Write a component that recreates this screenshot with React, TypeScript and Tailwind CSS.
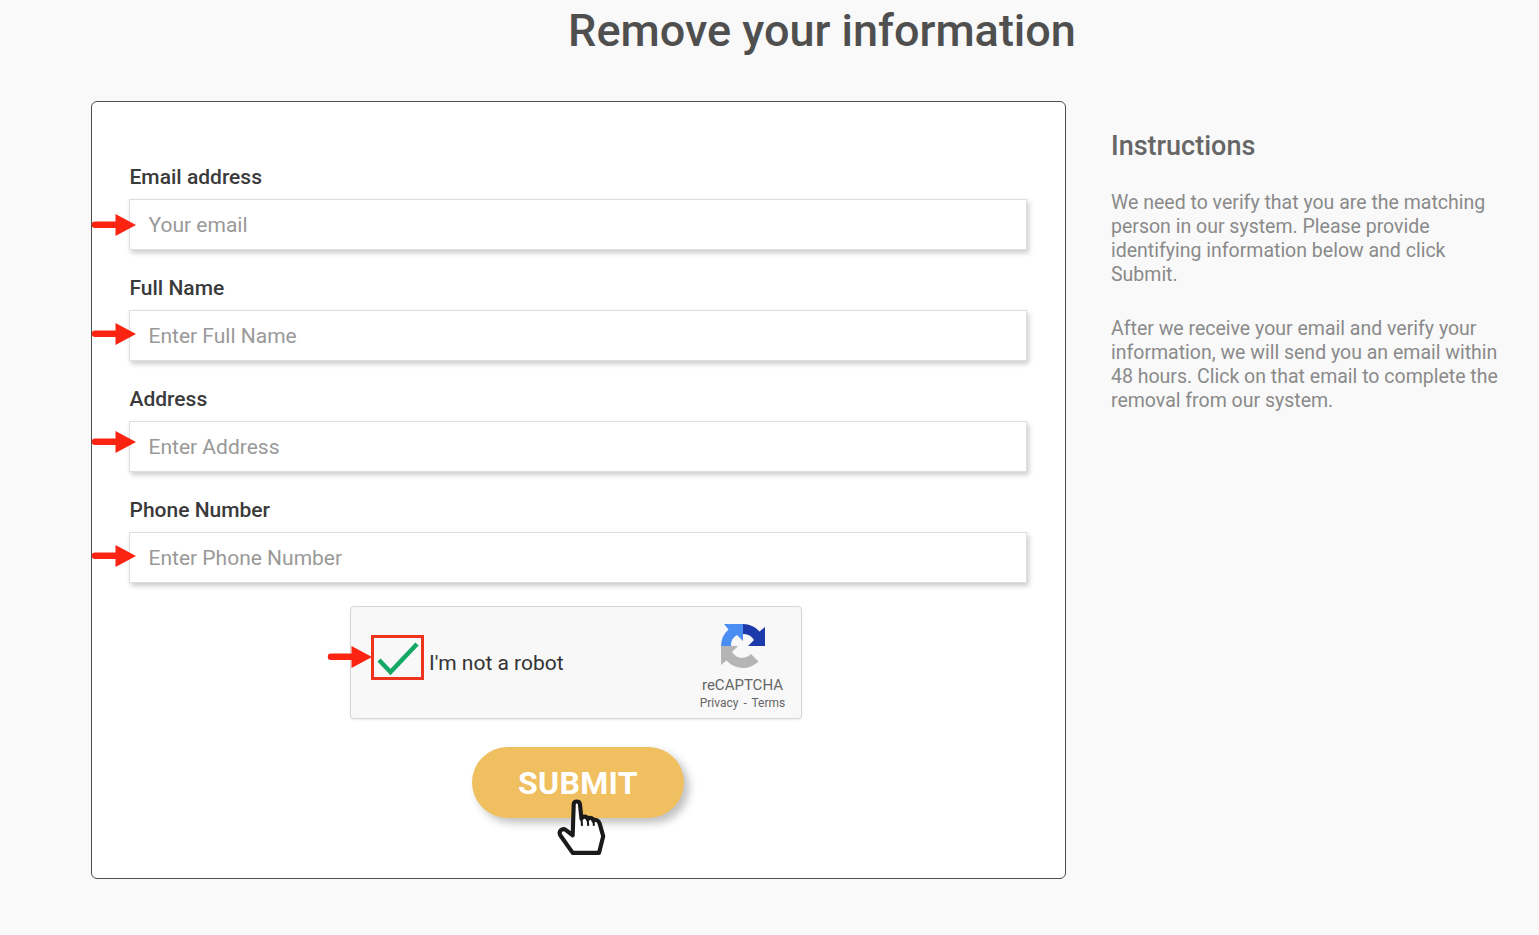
const RedArrow = ({ className }: { className: string }) => (
  <svg className={className} width="46" height="24" viewBox="0 0 46 24">
    <path d="M5 8.500H25.500V1L46 12L25.500 23V15H5A3.250 3.250 0 0 1 5 8.500Z" fill="#fb2413" />
  </svg>
);

const fields = [
  { label: 'Email address', placeholder: 'Your email', arrow: 'absolute left-[-39px] top-[14px]' },
  { label: 'Full Name', placeholder: 'Enter Full Name', arrow: 'absolute left-[-39px] top-[12px]' },
  { label: 'Address', placeholder: 'Enter Address', arrow: 'absolute left-[-39px] top-[9px]' },
  { label: 'Phone Number', placeholder: 'Enter Phone Number', arrow: 'absolute left-[-39px] top-[12px]' },
];

const RecaptchaLogo = () => (
  <svg width="44" height="44" viewBox="0 0 44 44">
    <path d="M37.500 37.500A22 22 0 0 1 5.500 36.500L0 41V22H17L11 28A12 12 0 0 0 30 30Z" fill="#b5b5b5" />
    <path d="M0 22A22 22 0 0 1 7.500 5.500L3 0H22V17L16 11A12 12 0 0 0 10 22Z" fill="#4a8ef4" />
    <path d="M22 0A22 22 0 0 1 38.500 7.500L44 3V22H27L33 16A12 12 0 0 0 22 10Z" fill="#1c3aa9" />
  </svg>
);

const HandCursor = () => (
  <svg width="54" height="60" viewBox="0 0 52 58" className="absolute left-[83px] top-[51px] blur-[0.5px]">
    <path
      d="M18 6C18 2.500 23.500 2.500 24 6L25.500 20C27 17 31 17.500 31.500 20.500C33 18.500 36.500 19 37 22C38.500 20.500 42 21 43 24.500L46.500 37L42.500 53H17L5 36C3 32 7 28.500 10.500 31L17 36Z"
      fill="#ffffff"
      stroke="#1a1a1a"
      strokeWidth="4"
      strokeLinejoin="round"
    />
    <path d="M25.500 20L26 27M31.500 20.500L32 27M37 22L37.500 27" fill="none" stroke="#1a1a1a" strokeWidth="2" />
  </svg>
);

export default function App() {
  return (
    <div className="min-h-[935px] bg-[#f9f9f9] font-['Roboto',sans-serif] pl-[91px] overflow-hidden">
      <div className="flex justify-center pl-[14px] h-[101px]">
        <h1 className="text-[45px] leading-[62px] font-medium text-[#4f4f4f]">Remove your information</h1>
      </div>

      <div className="flex items-start">
        <div className="w-[975px] h-[778px] shrink-0 bg-white border border-[#4d4d4d] rounded-[6px] pl-[37px] pt-[59px]">
          <div className="flex flex-col gap-[22px]">
            {fields.map((field) => (
              <div key={field.label} className="w-[898px]">
                <label className="block h-[38px] pl-[0.500px] text-[21px] leading-[32px] font-medium text-[#3a3a3a]">
                  {field.label}
                </label>
                <div className="relative">
                  <input
                    placeholder={field.placeholder}
                    className="w-full h-[51px] bg-white border border-[#dedede] pl-[18.500px] text-[21px] outline-none shadow-[2px_3px_5px_rgba(0,0,0,0.2)] placeholder:text-[#999999]"
                  />
                  <RedArrow className={field.arrow} />
                </div>
              </div>
            ))}
          </div>

          <div className="relative ml-[221px] mt-[23px] w-[452px] h-[113px] bg-[#f8f8f8] border border-[#d6d6d6] rounded-[4px] shadow-[0_1px_2px_rgba(0,0,0,0.08)] flex items-center justify-between pl-[20px] pr-[16px]">
            <RedArrow className="absolute left-[-25px] top-[38px]" />
            <div className="flex items-center gap-[5px]">
              <div className="w-[53px] h-[45px] mb-[10px] border-[3px] border-[#f0331c] flex items-center justify-center">
                <svg width="44" height="36" viewBox="0 0 44 36">
                  <path d="M3 20L14.500 32L41 4" fill="none" stroke="#14a865" strokeWidth="4.500" />
                </svg>
              </div>
              <span className="mt-[2px] text-[21px] text-[#333333]">I'm not a robot</span>
            </div>
            <div className="flex flex-col items-center w-[85px] pt-[11px]">
              <RecaptchaLogo />
              <span className="mt-[8px] text-[15px] leading-[18px] text-[#666666]">reCAPTCHA</span>
              <span className="text-[12px] leading-[18px] text-[#666666] whitespace-nowrap [word-spacing:2px]">Privacy - Terms</span>
            </div>
          </div>

          <div className="relative ml-[343px] mt-[28px] w-[212px]">
            <button className="w-[212px] h-[71px] rounded-full bg-[#f0c060] text-white text-[32px] font-bold tracking-[0.3px] shadow-[5px_5px_8px_rgba(0,0,0,0.25)]">
              SUBMIT
            </button>
            <HandCursor />
          </div>
        </div>

        <div className="ml-[45px] w-[395px] pt-[25px] text-[#8a8a8a]">
          <h2 className="text-[27px] leading-[40px] font-medium text-[#666666]">Instructions</h2>
          <p className="mt-[25px] text-[19.500px] leading-[24px]">
            We need to verify that you are the matching person in our system. Please provide identifying information below and click Submit.
          </p>
          <p className="mt-[30px] text-[19.500px] leading-[24px]">
            After we receive your email and verify your information, we will send you an email within 48 hours. Click on that email to complete the removal from our system.
          </p>
        </div>
      </div>
    </div>
  );
}
